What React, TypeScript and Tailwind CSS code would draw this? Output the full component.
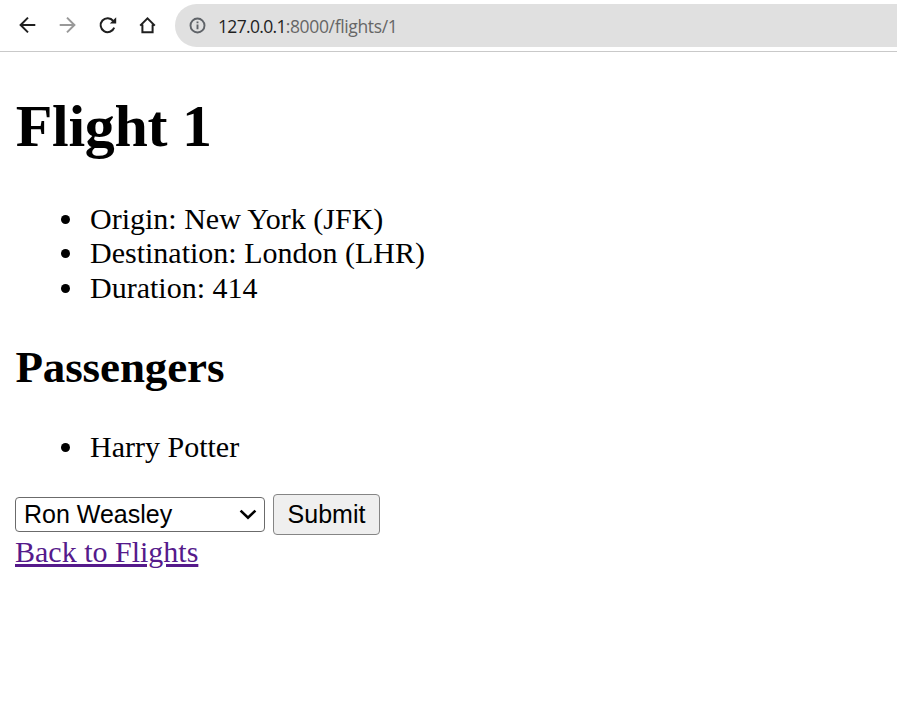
export default function App() {
  return (
    <div className="h-[712px] w-full overflow-hidden bg-white text-black">
      <header className="flex h-[52px] items-start border-b border-[#c9c9c9] pl-[16px] pt-[4px]">
        <nav className="flex h-[43px] w-[159px] shrink-0 items-center gap-[16px]">
          <svg width="24" height="24" viewBox="0 0 24 24" className="shrink-0" fill="none" stroke="#1f1f1f" strokeWidth="2">
            <path d="M19.3 11H4.8M12 3.6L4.6 11L12 18.4" />
          </svg>
          <svg width="24" height="24" viewBox="0 0 24 24" className="shrink-0" fill="none" stroke="#999999" strokeWidth="2">
            <path d="M3.7 11H18M11 3.6L18.4 11L11 18.4" />
          </svg>
          <svg width="24" height="24" viewBox="0 0 24 24" className="shrink-0" fill="none" stroke="#1f1f1f" strokeWidth="2">
            <path d="M18.2 13.6A7 7 0 1 1 17.2 6.9" />
            <path d="M20.2 3.3V9.5H13.8Z" fill="#1f1f1f" stroke="none" />
          </svg>
          <svg width="24" height="24" viewBox="0 0 24 24" className="shrink-0" fill="none" stroke="#1f1f1f" strokeWidth="2">
            <path d="M4.2 11.6L11.5 4.4L18.8 11.6M6.4 10.4V18.2H16.6V10.4" />
          </svg>
        </nav>
        <div className="flex h-[43px] grow items-center rounded-l-full bg-[#e0e0e0] pl-[14px]">
          <svg width="17" height="17" viewBox="0 0 17 17" className="shrink-0" fill="none" stroke="#5f6368" strokeWidth="1.9">
            <circle cx="8.5" cy="8.5" r="7" />
            <path d="M8.5 7.6V12.2M8.5 4.5V6.3" />
          </svg>
          <span className="ml-[12px] whitespace-nowrap font-['Open_Sans','Noto_Sans',sans-serif] text-[17.5px] leading-6 tracking-[-0.35px] text-[#666666]">
            <span className="tracking-[-0.68px] text-[#1f1f1f]">127.0.0.1</span>:8000/flights/1
          </span>
        </div>
      </header>
      <main className="px-[15px] font-['Liberation_Serif','Times_New_Roman',serif] text-[30px] leading-[34.5px]">
        <h1 className="mt-[40px] pl-[0.7px] text-[60px] font-bold leading-[69px] tracking-[-0.3px]">Flight 1</h1>
        <ul className="mt-[40.7px] list-disc pl-[71px]">
          <li className="pl-[4px]">Origin: New York (JFK)</li>
          <li className="pl-[4px]">Destination: London (LHR)</li>
          <li className="pl-[4px]">Duration: 414</li>
        </ul>
        <h2 className="mt-[36.7px] pl-[0.4px] text-[45px] font-bold leading-[51px] tracking-[-0.1px]">Passengers</h2>
        <ul className="mt-[37.4px] list-disc pl-[71px]">
          <li className="pl-[4px]">Harry Potter</li>
        </ul>
        <form className="mt-[29px] flex h-[41px] items-center gap-[8px] font-['Liberation_Sans',Arial,sans-serif] text-[25px] leading-[28px]" onSubmit={(e) => e.preventDefault()}>
          <div className="flex h-[35px] w-[250px] items-center justify-between rounded-[4px] border-[1.5px] border-[#6b6b6b] bg-white pl-[8px] pr-[6px]">
            <span>Ron Weasley</span>
            <svg width="20" height="14" viewBox="0 0 20 14" fill="none" stroke="#000" strokeWidth="2.6">
              <path d="M2.6 3.6L10 10.8L17.4 3.6" />
            </svg>
          </div>
          <button className="h-[41px] w-[107px] rounded-[4px] border-[1.5px] border-[#858585] bg-[#efefef]">Submit</button>
        </form>
        <a href="#" className="block w-fit text-[#551a8b] underline">Back to Flights</a>
      </main>
    </div>
  );
}
